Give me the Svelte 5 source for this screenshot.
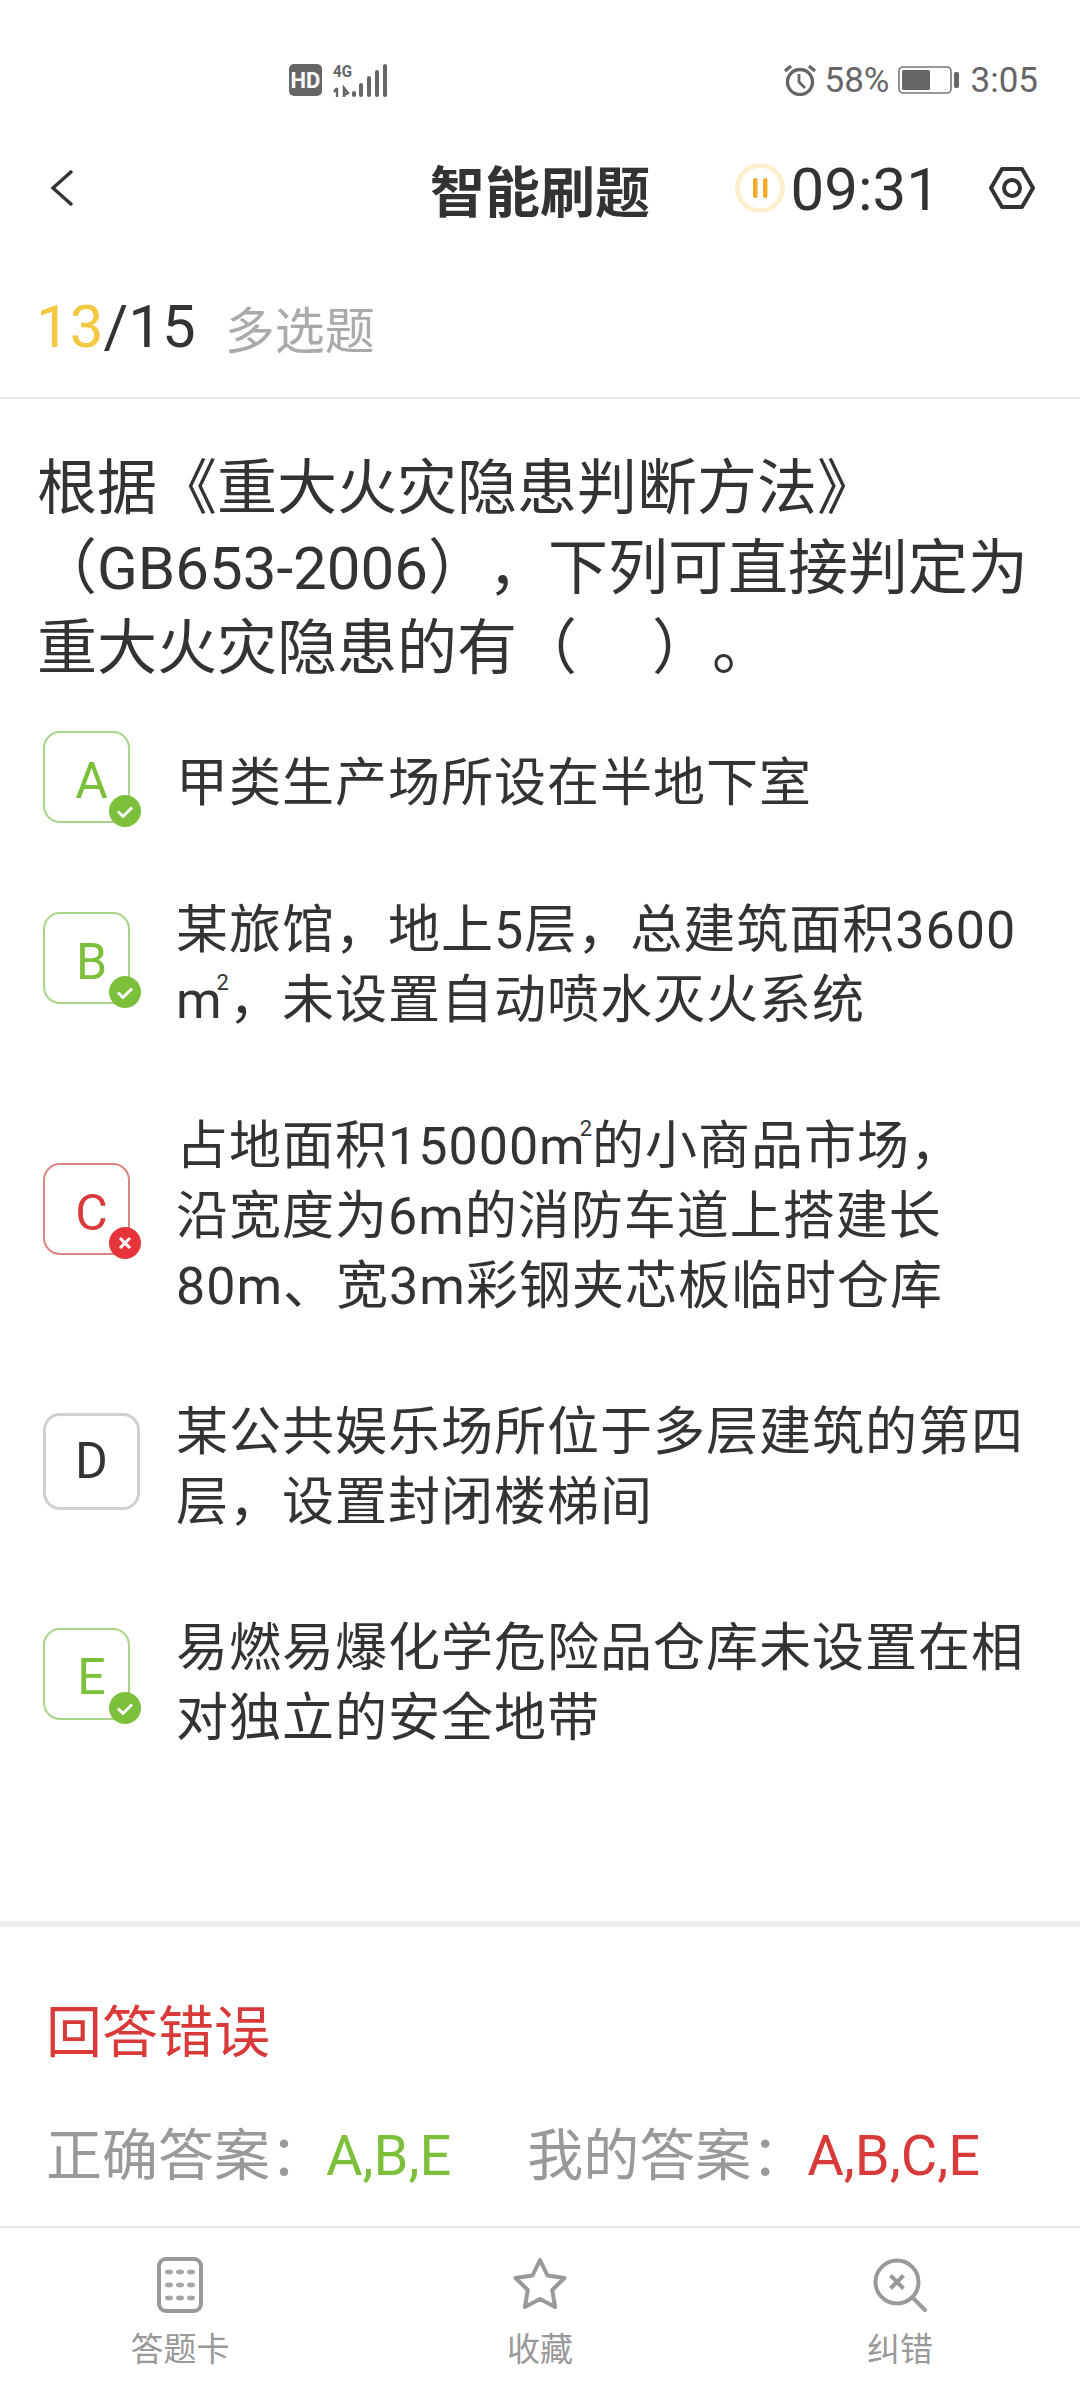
<script>
	const options = [
		{ key: 'A', state: 'right', lines: ['甲类生产场所设在半地下室'] },
		{ key: 'B', state: 'right', lines: ['某旅馆，地上5层，总建筑面积3600', 'm²，未设置自动喷水灭火系统'] },
		{ key: 'C', state: 'wrong', lines: ['占地面积15000m²的小商品市场，', '沿宽度为6m的消防车道上搭建长', '80m、宽3m彩钢夹芯板临时仓库'] },
		{ key: 'D', state: 'none', lines: ['某公共娱乐场所位于多层建筑的第四', '层，设置封闭楼梯间'] },
		{ key: 'E', state: 'right', lines: ['易燃易爆化学危险品仓库未设置在相', '对独立的安全地带'] }
	];

	function parts(line) {
		return line.split('²');
	}
</script>

<div class="page">
	<!-- status bar -->
	<div class="status">
		<svg class="hd" width="33" height="32" viewBox="0 0 33 32">
			<rect width="33" height="32" rx="5" fill="#666" />
			<text x="16.5" y="23.500" text-anchor="middle" class="hd-text">HD</text>
		</svg>
		<svg class="net" width="54" height="34" viewBox="0 0 54 34">
			<text x="0" y="13" textLength="19" lengthAdjust="spacingAndGlyphs" class="net-text">4G</text>
			<path d="M4 24v9M1 28l3-4M11 33v-9l4 5-4 2" fill="none" stroke="#666" stroke-width="2.4" />
			<g fill="#666">
				<rect x="19" y="27" width="4" height="6" rx="2" />
				<rect x="26" y="19" width="4" height="14" rx="2" />
				<rect x="34" y="12" width="4" height="21" rx="2" />
				<rect x="42" y="6" width="4" height="27" rx="2" />
				<rect x="50" y="0" width="4" height="33" rx="2" />
			</g>
		</svg>
		<div class="status-right">
			<svg width="34" height="32" viewBox="0 0 34 32" fill="none" stroke="#666">
				<circle cx="17" cy="18" r="12.500" stroke-width="3.4" />
				<path d="M16 10v8l6 6" stroke-width="2.8" />
				<path d="M2 7l6-5M32 7l-6-5" stroke-width="3.4" />
			</svg>
			<span class="pct">58%</span>
			<svg width="61" height="28" viewBox="0 0 61 28">
				<rect x="1" y="1" width="52" height="26" rx="4" fill="none" stroke="#777" stroke-width="1.6" />
				<rect x="4" y="4" width="28" height="20" rx="1.5" fill="#666" />
				<rect x="56" y="6" width="5" height="16" rx="2" fill="#666" />
			</svg>
			<span class="clock">3:05</span>
		</div>
	</div>

	<!-- header -->
	<header class="head">
		<svg class="back" width="24" height="38" viewBox="0 0 24 38" fill="none" stroke="#333" stroke-width="3.4">
			<path d="M22 2L3 19l19 17" />
		</svg>
		<h1>智能刷题</h1>
		<div class="head-right">
			<svg width="50" height="50" viewBox="0 0 50 50">
				<circle cx="25" cy="25" r="22.500" fill="#fff" stroke="#fdf0cf" stroke-width="5" />
				<rect x="18" y="15" width="4.500" height="20" rx="2.200" fill="#f0ab2e" />
				<rect x="28" y="15" width="4.500" height="20" rx="2.200" fill="#f0ab2e" />
			</svg>
			<span class="timer">09:31</span>
			<svg class="hex" width="48" height="44" viewBox="0 0 48 44" fill="none" stroke="#333">
				<path d="M14 3h20l11 19-11 19H14L3 22z" stroke-width="4" stroke-linejoin="round" />
				<circle cx="24" cy="22" r="8" stroke-width="4" />
			</svg>
		</div>
	</header>

	<div class="progress">
		<span class="count"><em>13</em>/15</span>
		<span class="kind">多选题</span>
	</div>

	<main class="body">
		<p class="question">根据《重大火灾隐患判断方法》<br />（GB653-2006），下列可直接判定为<br />重大火灾隐患的有（　&nbsp;）。</p>

		<div class="options">
			{#each options as opt}
				<div class="option">
					<div class="key {opt.state}">
						{opt.key}
						{#if opt.state === 'right'}
							<svg class="badge" width="32" height="32" viewBox="0 0 32 32">
								<circle cx="16" cy="16" r="16" fill="#7cbf3a" />
								<path d="M9 16.500l5 5 9-9" fill="none" stroke="#fff" stroke-width="3" />
							</svg>
						{:else if opt.state === 'wrong'}
							<svg class="badge" width="32" height="32" viewBox="0 0 32 32">
								<circle cx="16" cy="16" r="16" fill="#e5353a" />
								<path d="M11 11l10 10M21 11L11 21" fill="none" stroke="#fff" stroke-width="3" />
							</svg>
						{/if}
					</div>
					<div class="text">
						{#each opt.lines as line}
							<div>
								{#each parts(line) as part, i}{#if i > 0}<sup>2</sup>{/if}{part}{/each}
							</div>
						{/each}
					</div>
				</div>
			{/each}
		</div>
	</main>

	<section class="result">
		<h2>回答错误</h2>
		<p class="answers">
			<span class="label">正确答案：</span><span class="green">A,B,E</span>
			<span class="label mine">我的答案：</span><span class="red">A,B,C,E</span>
		</p>
	</section>

	<nav class="tabs">
		<div class="tab">
			<svg width="46" height="56" viewBox="0 0 46 56">
				<rect x="2" y="2" width="42" height="52" rx="7" fill="none" stroke="#999" stroke-width="4" />
				<g fill="#a6a6a6">
					{#each [15, 28, 41] as y}
						{#each [12, 23, 34] as x}
							<ellipse cx={x} cy={y} rx="4" ry="2.400" />
						{/each}
					{/each}
				</g>
			</svg>
			<span>答题卡</span>
		</div>
		<div class="tab">
			<svg width="56" height="56" viewBox="0 0 56 56">
				<path d="M28 3l7.500 15.500 17 2.500-12.300 12 2.900 17L28 42l-15.100 8 2.900-17L3.500 21l17-2.500z" fill="none" stroke="#999" stroke-width="4" stroke-linejoin="round" />
			</svg>
			<span>收藏</span>
		</div>
		<div class="tab">
			<svg width="56" height="56" viewBox="0 0 56 56">
				<circle cx="25" cy="25" r="21.500" fill="none" stroke="#999" stroke-width="4" />
				<path d="M18.500 18.500l13 13M31.500 18.500l-13 13" fill="none" stroke="#999" stroke-width="4" />
				<path d="M42 42l11 11" fill="none" stroke="#999" stroke-width="4" stroke-linecap="round" />
			</svg>
			<span>纠错</span>
		</div>
	</nav>
</div>

<style>
	:global(body) {
		margin: 0;
		background: #fff;
	}

	.page {
		width: 1080px;
		height: 2400px;
		display: flex;
		flex-direction: column;
		background: #fff;
		color: #333;
		font-family: Roboto, 'Noto Sans CJK SC', sans-serif;
		text-spacing-trim: space-all;
		overflow: hidden;
	}

	.status {
		height: 128px;
		padding: 63px 0 0 289px;
		box-sizing: border-box;
		display: flex;
		align-items: flex-start;
		gap: 11px;
	}

	.hd,
	.net {
		margin-top: 1px;
		overflow: visible;
	}

	.hd-text {
		font: bold 22px Roboto, sans-serif;
		fill: #fff;
	}

	.net-text {
		font: bold 17px Roboto, sans-serif;
		fill: #666;
	}

	.status-right {
		margin-left: auto;
		padding-right: 42px;
		display: flex;
		align-items: center;
		height: 34px;
		color: #666;
		font-size: 35px;
		gap: 8px;
	}

	.clock {
		margin-left: 4px;
	}

	.head {
		height: 120px;
		padding: 0 47px;
		display: grid;
		grid-template-columns: 1fr auto 1fr;
		align-items: center;
		box-sizing: border-box;
	}

	.back {
		margin-left: 3px;
	}

	.head h1 {
		margin: 0;
		font-size: 55px;
		font-weight: 700;
		color: #333;
	}

	.head-right {
		display: flex;
		align-items: center;
		justify-content: flex-end;
		margin-right: -3px;
	}

	.timer {
		font-size: 60px;
		margin-left: 6px;
		padding-top: 3px;
	}

	.hex {
		margin-left: 48px;
	}

	.progress {
		height: 151px;
		padding: 8px 0 0 36px;
		box-sizing: border-box;
		display: flex;
		align-items: center;
		gap: 29px;
		border-bottom: 2px solid #e9e9e9;
	}

	.count {
		font-size: 60px;
	}

	.count em {
		font-style: normal;
		color: #f5c842;
	}

	.kind {
		font-size: 50px;
		color: #aaa;
	}

	.body {
		flex: 1;
		padding-top: 50px;
	}

	.question {
		margin: 0 0 58px;
		padding-left: 37px;
		font-size: 60px;
		line-height: 80px;
		color: #333;
	}

	.options {
		display: flex;
		flex-direction: column;
		gap: 76px;
		padding-left: 43px;
	}

	.option {
		display: flex;
		align-items: center;
		gap: 36px;
	}

	.key {
		position: relative;
		flex: none;
		width: 97px;
		height: 97px;
		margin: -19px 0 -5px;
		display: flex;
		align-items: center;
		justify-content: center;
		font-size: 50px;
		box-sizing: border-box;
		border-radius: 17px;
	}

	.option:first-child .key {
		margin: -15px 0 -9px;
	}

	.option:nth-child(2) .key,
	.option:nth-child(3) .key {
		margin: -17px 0 -8px;
	}

	.key::before {
		content: '';
		position: absolute;
		left: 0;
		top: -1px;
		width: 87px;
		height: 92px;
		box-sizing: border-box;
		border-radius: 17px;
		border: 2px solid;
	}

	.key.right {
		color: #7cbf3a;
	}

	.key.right::before {
		border-color: #a9d489;
	}

	.key.wrong {
		color: #d83a3a;
	}

	.key.wrong::before {
		border-color: #dc8585;
	}

	.key.none {
		color: #333;
		border: 3px solid #cfcfcf;
	}

	.key.none::before {
		display: none;
	}

	.badge {
		position: absolute;
		left: 66px;
		top: 63px;
	}

	.text {
		flex: 1;
		font-size: 52px;
		line-height: 70px;
		white-space: nowrap;
		letter-spacing: 1px;
	}

	sup {
		font-size: 22px;
		line-height: 0;
		vertical-align: 28px;
		margin: 0 -1px 0 -6px;
	}

	.result {
		border-top: 6px solid #eee;
		height: 307px;
		box-sizing: border-box;
		padding: 68px 0 0 46px;
		border-bottom: 2px solid #e5e5e5;
	}

	.result h2 {
		margin: 0;
		font-size: 56px;
		font-weight: 400;
		line-height: 76px;
		color: #d83a3a;
	}

	.answers {
		margin: 47px 0 0;
		font-size: 56px;
		line-height: 76px;
		white-space: nowrap;
		display: flex;
	}

	.label {
		color: #999;
	}

	.mine {
		margin-left: 76px;
	}

	.green {
		color: #7cbf3a;
	}

	.red {
		color: #d83a3a;
	}

	.tabs {
		height: 172px;
		flex: none;
		display: grid;
		grid-template-columns: repeat(3, 1fr);
		box-sizing: border-box;
		padding-top: 29px;
	}

	.tab {
		display: flex;
		flex-direction: column;
		align-items: center;
		gap: 14px;
		color: #999;
		font-size: 33px;
		line-height: 46px;
	}
</style>
